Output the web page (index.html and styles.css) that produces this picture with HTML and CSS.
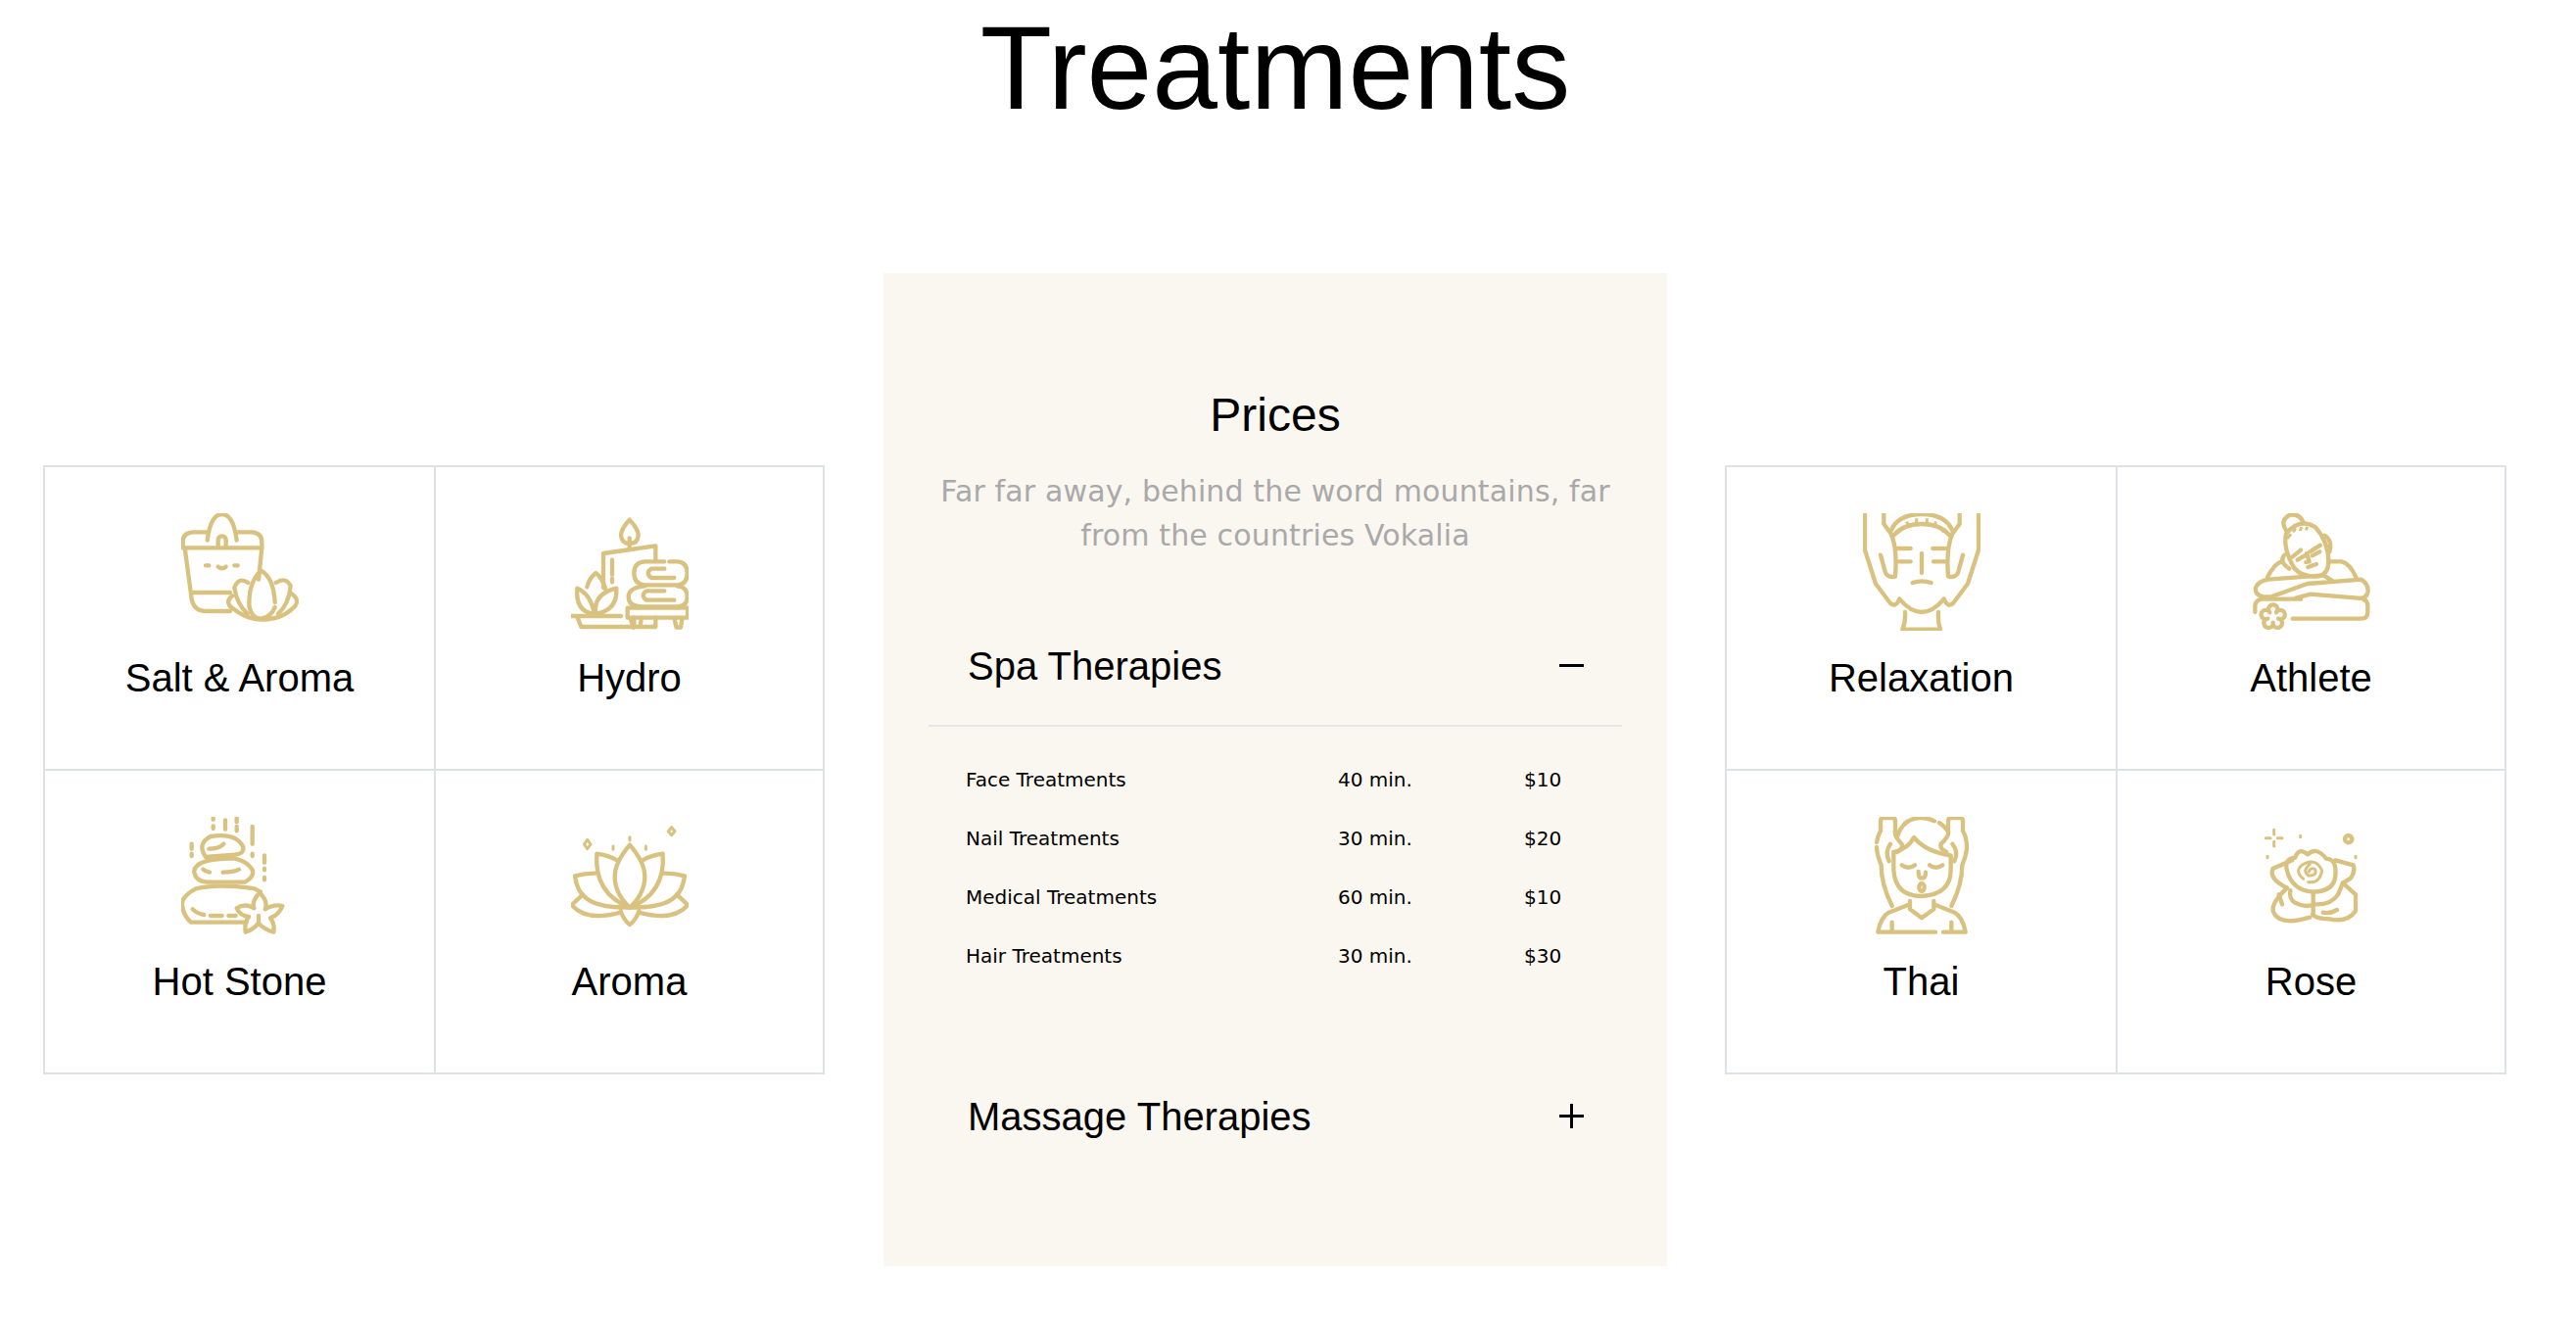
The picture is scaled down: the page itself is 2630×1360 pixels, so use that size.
FILE: index.html
```html
<!DOCTYPE html>
<html lang="en">
<head>
    <meta charset="UTF-8">
    <title>Treatments</title>
    <link rel="stylesheet" href="styles.css">
</head>
<body>
<div class="page">
    <h1 class="title">Treatments</h1>

    <div class="columns">
        <div class="treatments">
            <div class="cell">
                <svg class="ico" viewBox="75 42 360 360">
                    <path d="M155 125Q165 45 200 45Q235 45 245 125"/>
                    <path d="M110 100H155M245 100H290Q322 102 322 130V148H80V130Q80 102 110 100"/>
                    <path d="M188 145V125Q188 112 200 112Q212 112 212 125V145"/>
                    <path d="M86 148L105 290Q108 342 150 342H225M105 285H225M322 148L312 245"/>
                    <path d="M150 202H160M238 202H248M188 206Q200 216 212 206"/>
                    <path d="M362 315Q358 240 320 218Q282 250 283 325Q290 365 320 365Q350 360 362 330"/>
                    <path d="M280 255Q250 235 238 270Q245 320 278 350M365 255Q395 235 410 265Q405 320 372 350"/>
                    <path d="M232 295Q205 315 235 335Q280 368 320 368Q380 368 415 335Q445 310 412 288"/>
                </svg>
                <h3 class="label">Salt &amp; Aroma</h3>
            </div>
            <div class="cell">
                <svg class="ico" viewBox="69 42 360 360">
                    <path d="M248 62Q222 90 222 110Q224 135 248 135Q274 135 275 110Q275 90 248 62ZM248 118V150"/>
                    <path d="M168 270V165L328 142V185M195 185V230M195 243V253"/>
                    <path d="M355 190H295Q262 192 262 226Q262 260 295 262H395Q425 260 425 226Q425 192 395 190H370M355 212H315Q295 226 315 240H385"/>
                    <path d="M295 265Q245 270 245 298Q245 328 285 328H395Q425 328 425 298Q425 268 395 265M355 280H300Q280 294 300 308H385"/>
                    <path d="M242 332H426V362H242ZM250 362L260 392M385 362L392 392H405L410 362"/>
                    <path d="M70 357H222M88 360L100 390H328V362M262 362V390M285 362L280 390"/>
                    <path d="M118 268Q125 240 145 225Q165 240 175 275"/>
                    <path d="M88 272Q82 345 140 350Q130 290 88 272ZM208 272Q212 340 145 350Q135 290 208 272Z"/>
                </svg>
                <h3 class="label">Hydro</h3>
            </div>
            <div class="cell">
                <svg class="ico" viewBox="75 42 360 360">
                    <path d="M173 45V50M173 70V78M210 52V80M245 45V58M245 72V85M293 72V125M293 155V162M330 160V182M330 200V205M330 228V235M107 125V140M107 155V162"/>
                    <path d="M150 165Q122 125 165 102Q245 90 265 135Q268 155 240 158Z"/>
                    <path d="M160 140Q190 140 205 125M142 203Q150 210 162 212M203 212Q235 212 252 203"/>
                    <path d="M150 178Q112 190 115 212Q120 240 155 242H270Q300 225 293 205Q280 180 240 170Q190 168 150 178Z"/>
                    <path d="M120 262Q76 285 78 312Q82 345 105 365H275M120 262Q190 246 300 262L318 272"/>
                    <path d="M110 325Q125 340 145 342M165 345H200M220 345H242"/>
                    <path d="M315 275Q342 300 332 325Q360 308 385 315Q375 342 348 352Q362 370 358 395Q330 388 312 368Q295 388 272 395Q268 365 282 348Q255 345 245 322Q270 305 298 322Q290 300 315 275Z"/>
                    <path d="M312 368V345"/>
                </svg>
                <h3 class="label">Hot Stone</h3>
            </div>
            <div class="cell">
                <svg class="ico" viewBox="0 0 360 360">
                    <path d="M180 86Q134 140 134 183Q134 235 180 278Q226 235 226 183Q226 140 180 86Z"/>
                    <path d="M141 133Q115 118 79 113Q70 235 180 278M219 133Q245 118 281 113Q290 235 180 278"/>
                    <path d="M79 173Q45 172 12 181Q18 225 40 243Q70 278 180 278M281 173Q315 172 348 181Q342 225 320 243Q290 278 180 278"/>
                    <path d="M36 238L2 270Q45 322 152 293M324 238L358 270Q315 322 208 293"/>
                    <path d="M152 288Q160 315 180 330Q200 315 208 288"/>
                    <path class="ico-dot" d="M50 70L60 84L50 98L40 84ZM308 32L318 44L308 56L298 44ZM129 90V100M180 62V72M229 90V100"/>
                </svg>
                <h3 class="label">Aroma</h3>
            </div>
        </div>

        <div class="prices">
            <h2 class="prices-title">Prices</h2>
            <p class="prices-sub">Far far away, behind the word mountains, far from the countries Vokalia</p>

            <div class="accordion-head open">
                <span>Spa Therapies</span>
                <span class="toggle toggle-minus"></span>
            </div>
            <div class="rows">
                <div class="row"><span>Face Treatments</span><span>40 min.</span><span>$10</span></div>
                <div class="row"><span>Nail Treatments</span><span>30 min.</span><span>$20</span></div>
                <div class="row"><span>Medical Treatments</span><span>60 min.</span><span>$10</span></div>
                <div class="row"><span>Hair Treatments</span><span>30 min.</span><span>$30</span></div>
            </div>

            <div class="accordion-head">
                <span>Massage Therapies</span>
                <span class="toggle toggle-plus"></span>
            </div>
        </div>

        <div class="treatments">
            <div class="cell">
                <svg class="ico" viewBox="66 42 360 360">
                    <path d="M72 42V155L105 258L150 318Q166 332 178 305M420 42V155L387 258L342 318Q326 332 314 305"/>
                    <path d="M130 42V75L152 105Q172 150 165 235Q145 242 135 225L120 170M362 42V75L340 105Q320 150 327 235Q347 242 357 225L372 170"/>
                    <path d="M178 305Q246 385 314 305"/>
                    <path d="M150 100Q170 45 246 45Q322 45 342 100M160 110Q190 75 246 75Q302 75 332 110"/>
                    <path class="ico-thin" d="M172 90L182 100M200 68L206 80M230 58V72M262 58V72M290 68L284 80M318 90L308 100"/>
                    <path d="M172 150H212M175 190H212M280 150H318M282 190H318M246 165V225M218 255Q246 245 275 255"/>
                    <path d="M195 345Q197 375 187 398H303Q295 375 297 345"/>
                </svg>
                <h3 class="label">Relaxation</h3>
            </div>
            <div class="cell">
                <svg class="ico" viewBox="63 42 360 360">
                    <path d="M165 95Q145 65 175 48Q205 40 218 70"/>
                    <path d="M165 105Q205 55 255 85Q295 130 295 190Q295 228 265 235Q215 240 190 210Q155 150 165 105Z"/>
                    <path d="M282 110Q308 125 298 160M160 170Q142 190 175 212"/>
                    <path class="ico-thin" d="M168 120L180 106M187 100L194 88M208 96L212 84M226 94L230 84"/>
                    <path d="M185 175L210 155M238 160L270 140M200 185L222 172M245 172L268 160M228 165L236 190L226 192M232 207L258 198"/>
                    <path d="M108 238Q130 195 152 190M295 190H335Q360 195 380 240"/>
                    <path d="M120 298H95Q68 292 72 270Q80 250 110 245L280 232L305 248M120 298L230 258L395 245Q420 262 415 285Q410 305 385 302L240 290L195 302"/>
                    <path d="M70 345V325Q72 308 92 305H210M185 365H395Q415 365 415 345V325Q415 310 400 305"/>
                    <path d="M115 346A14 14 0 1 1 135 346A14 14 0 1 1 141 365A14 14 0 1 1 125 377A14 14 0 1 1 109 365A14 14 0 1 1 115 346Z"/>
                </svg>
                <h3 class="label">Athlete</h3>
            </div>
            <div class="cell">
                <svg class="ico" viewBox="66 42 360 360">
                    <path d="M120 85V55Q120 45 130 45H155Q165 45 165 55V85Q160 100 185 125Q190 140 170 150M120 85Q110 105 108 120M108 135Q108 155 122 190Q122 250 155 315"/>
                    <path d="M372 85V55Q372 45 362 45H337Q327 45 327 55V85Q332 100 305 125Q300 140 322 150M372 85Q384 105 384 135Q384 155 370 190Q370 250 337 315"/>
                    <path d="M172 100Q190 45 245 45Q265 45 285 55M300 60Q318 72 325 85"/>
                    <path d="M160 150Q205 140 222 105Q260 150 335 160M150 125Q132 150 146 178M340 125Q360 150 346 178"/>
                    <path d="M160 150V205Q165 285 246 285Q335 280 335 205V165"/>
                    <path d="M185 190Q205 205 225 190M270 190Q290 205 310 190M236 210Q236 230 246 230Q258 230 258 212"/>
                    <ellipse cx="246" cy="258" rx="8" ry="12"/>
                    <path d="M210 300V325L246 352L283 325V300M210 310L145 335Q120 350 112 395H288M312 395H380Q372 350 347 335L283 310M155 365V395M337 365V395"/>
                </svg>
                <h3 class="label">Thai</h3>
            </div>
            <div class="cell">
                <svg class="ico" viewBox="0 0 360 360">
                    <path class="ico-dot" d="M65 40V54M65 76V90M40 65H54M76 65H90M146 58V62M45 121V125M315 121V125"/>
                    <circle cx="293" cy="68" r="11"/>
                    <path d="M105 165Q95 128 130 125Q140 92 168 115Q195 90 225 128Q258 130 253 180Q250 228 185 230Q120 225 105 165Z"/>
                    <path class="ico-dot" d="M155 190Q125 165 155 145Q195 125 212 165Q205 205 170 200M175 145Q150 165 170 180Q200 180 190 160Q175 155 172 168"/>
                    <path d="M121 133L62 158Q48 190 105 218M253 133L308 148Q315 165 300 188L276 203"/>
                    <path d="M105 218Q50 270 65 295Q85 335 175 308M276 203L315 238V288Q290 325 235 313Q190 312 183 298"/>
                    <path d="M115 225Q110 250 129 263Q160 280 191 268Q240 270 261 238L276 203M185 230V298M90 268L80 238M215 293Q235 298 258 285"/>
                </svg>
                <h3 class="label">Rose</h3>
            </div>
        </div>
    </div>
</div>
</body>
</html>
```

FILE: styles.css
```css
body {
    margin: 0;
    background-color: #fff;
    color: #000;
    font-family: "Liberation Sans", Arial, sans-serif;
}
.page {
    width: 2604px;
}
.title {
    margin: 0;
    font-size: 120px;
    font-weight: 400;
    line-height: 138px;
    text-align: center;
}
.columns {
    display: flex;
    gap: 60px;
    align-items: flex-start;
    padding-left: 44px;
    margin-top: 141px;
}
.treatments {
    display: grid;
    grid-template-columns: 399px 397px;
    grid-auto-rows: 310px;
    margin-top: 196px;
    border-top: 2px solid #dee2e6;
    border-left: 2px solid #dee2e6;
    box-sizing: border-box;
    width: 798px;
}
.cell {
    border-right: 2px solid #dee2e6;
    border-bottom: 2px solid #dee2e6;
    text-align: center;
    padding-top: 47px;
    box-sizing: border-box;
}
.ico {
    display: block;
    width: 120px;
    height: 120px;
    margin: 0 auto;
    fill: none;
    stroke: #d9c180;
    stroke-width: 13;
    stroke-linecap: round;
    stroke-linejoin: round;
}
.ico-thin {
    stroke-width: 9;
    stroke-linecap: butt;
}
.ico-dot {
    stroke-width: 9;
}
.label {
    margin: 21px 0 0;
    font-size: 40px;
    font-weight: 400;
    line-height: 54px;
}
.prices {
    width: 800px;
    height: 1014px;
    margin-right: -1px;
    box-sizing: border-box;
    padding: 116px 46px 0;
    background-color: #faf7f1;
    text-align: center;
}
.prices-title {
    margin: 0;
    font-size: 48px;
    font-weight: 400;
    line-height: 58px;
}
.prices-sub {
    margin: 26px 0 0;
    font-family: "DejaVu Sans", Verdana, sans-serif;
    font-size: 30px;
    letter-spacing: 0.14px;
    line-height: 45px;
    color: #a9a9a9;
}
.accordion-head {
    display: flex;
    justify-content: space-between;
    align-items: center;
    height: 120px;
    padding: 0 40px;
    font-size: 40px;
    text-align: left;
}
.accordion-head.open {
    height: 122px;
    margin-top: 51px;
    border-bottom: 2px solid #e6e6e6;
    box-sizing: border-box;
}
.toggle {
    position: relative;
    display: block;
    width: 25px;
    height: 25px;
    margin: 0 -1px 2px 0;
}
.toggle-minus::before, .toggle-plus::before, .toggle-plus::after {
    content: "";
    position: absolute;
    background-color: #000;
}
.toggle-minus::before, .toggle-plus::before {
    left: 0;
    top: 11px;
    width: 25px;
    height: 3px;
}
.toggle-plus::after {
    left: 11px;
    top: 0;
    width: 3px;
    height: 25px;
}
.rows {
    padding: 24px 0 0 38px;
    height: 338px;
    box-sizing: border-box;
    font-family: "DejaVu Sans", Verdana, sans-serif;
    font-size: 20px;
    line-height: 60px;
    text-align: left;
}
.row {
    display: grid;
    grid-template-columns: 380px 190px auto;
}
```
